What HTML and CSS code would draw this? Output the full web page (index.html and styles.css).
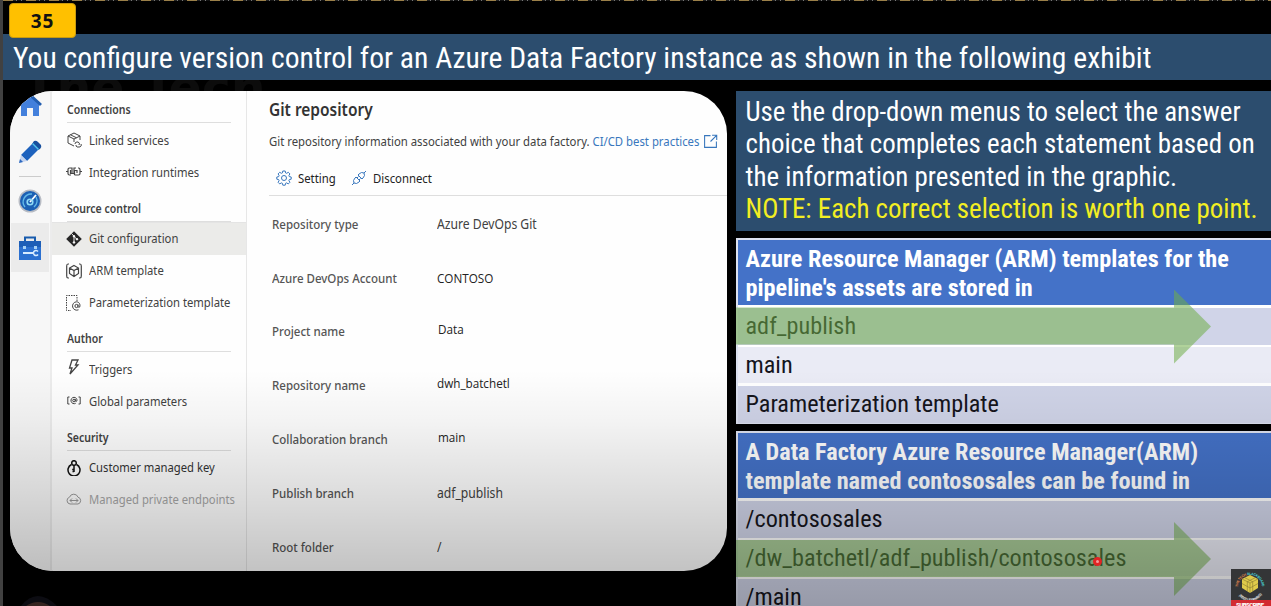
FILE: index.html
```
<!DOCTYPE html>
<html lang="en">
<head>
<meta charset="utf-8">
<title>Azure Data Factory version control</title>
<link rel="stylesheet" href="styles.css">
</head>
<body>
<main class="slide">
  <div class="ghost">The Tech</div>
  <header class="top"><div class="number">35</div></header>
  <h1 class="title"><span class="rc">You configure version control for an Azure Data Factory instance as shown in the following exhibit</span></h1>
  <div class="columns">
    <section class="exhibit">
      <aside class="rail">
        <svg class="r-home" viewBox="0 0 24 24"><path d="M3 10v13h6v-8h6v8h6V10l-9-8z" fill="#4380dc"/><path d="M1 12 12 2l11 10" fill="none" stroke="#235eb0" stroke-width="3"/></svg>
        <svg class="r-pen" viewBox="0 0 24 24"><path d="M3 15 16 2l6 6L9 21z" fill="#1d62bd"/><path d="M14 4l2-3q2-1 4 1l3 3q1 2-1 4l-2 1z" fill="#164f9e"/><path d="m14 4 6 6 1-1-6-6z" fill="#52c6ef"/><path d="m3 15-2 8 8-2z" fill="#c5d4ee"/><path d="m1 23 1-4 3 3z" fill="#2d69c0"/></svg>
        <hr class="r-line">
        <svg class="r-gauge" viewBox="0 0 24 24"><circle cx="12" cy="12" r="11.5" fill="#b8bcc4"/><circle cx="12" cy="12" r="10" fill="#1c60b4"/><path d="M7 18a8 8 0 0 1 7-13M18 8a8 8 0 0 1-2 10" fill="none" stroke="#63b9e8" stroke-width="1.4"/><path d="m12 13 6-7" stroke="#fff" stroke-width="1.8"/><circle cx="12" cy="13" r="2.8" fill="none" stroke="#8edaf5" stroke-width="1.6"/></svg>
        <div class="r-active"><svg viewBox="0 0 24 24"><path d="M7 5V1.5h10V5" fill="none" stroke="#195cae" stroke-width="2"/><path d="M1 5h22v19H1z" fill="#2b70d0"/><path d="M1 5h22v6H1z" fill="#1d5eb7"/><path d="M5 10h3v3H5zm11 0h3v3h-3z" fill="#a7d1f5"/><path d="M5 17h11" stroke="#d7ebff" stroke-width="2"/><path d="M20 15.500a2.500 2.500 0 1 0 0 3" fill="none" stroke="#d7ebff" stroke-width="1.500"/></svg></div>
      </aside>
      <nav class="nav">
        <div class="group"><h2><span class="sg">Connections</span></h2>
          <div class="item"><svg viewBox="0 0 16 16"><path d="M8 14 2 11V4l6-3 6 3v4M2 4l6 3 6-3M8 7v3M4.500 2.800l6 3"/><path d="M9 12a2 2 0 0 1 2-2h1a2 2 0 0 1 1 3M15 12a2 2 0 0 1-2 3h-2a2 2 0 0 1-1-2"/></svg><span class="sg">Linked services</span></div>
          <div class="item"><svg viewBox="0 0 16 16"><path d="M0 7.500h2M14 7.500h2M5 11H3.500Q2 11 2 9.500v-4Q2 4 3.500 4H6v5M4.500 6v3.500H8V4h2M8.500 11h4q1.500 0 1.500-1.500v-4Q14 4 12.500 4H12M8.500 11V6.500H11V9" stroke-width="1.2"/></svg><span class="sg">Integration runtimes</span></div>
        </div>
        <div class="group"><h2><span class="sg">Source control</span></h2>
          <div class="item active"><svg viewBox="0 0 16 16"><path d="m8 .2 7.800 7.800L8 15.800.2 8z" fill="#262626" stroke="none"/><path d="m5.500 2.500 5.500 6M8 5v7" stroke="#efeeec"/><circle cx="8" cy="5.200" r=".8" fill="#fff" stroke="#fff"/><circle cx="8" cy="11.500" r=".8" fill="#fff" stroke="#fff"/><circle cx="11" cy="8.200" r=".8" fill="#fff" stroke="#fff"/></svg><span class="sg">Git configuration</span></div>
          <div class="item"><svg viewBox="0 0 16 16"><path d="M3 1H2Q.7 1 .7 3v10q0 2 1.300 2h1M13 1h1q1.300 0 1.300 2v10q0 2-1.300 2h-1M8 2.500l4.500 2.500v5.500L8 13.500l-4.500-3V5zM3.500 5 8 7.500 12.500 5M8 7.500v6" stroke-width="1.200"/></svg><span class="sg">ARM template</span></div>
          <div class="item"><svg viewBox="0 0 16 16"><path d="M11 6V.5H.5v15H5" stroke-dasharray="1.500 1"/><circle cx="10.500" cy="11" r="1.600"/><path d="M12 9.500v2q.5 1.500 1.700.5c1-3-1-5.200-3.200-5.200a4.200 4.200 0 1 0 2 8"/></svg><span class="sg">Parameterization template</span></div>
        </div>
        <div class="group"><h2><span class="sg">Author</span></h2>
          <div class="item"><svg class="up" viewBox="0 0 16 16"><path d="M6 1h6L9.500 6H12L4 15l2-6H3.500z" stroke-width="1.300"/></svg><span class="sg">Triggers</span></div>
          <div class="item"><svg viewBox="0 0 16 16"><path d="M3.500 4H1.800v7h1.700M12.500 4h1.700v7h-1.700"/><circle cx="8" cy="7.500" r="1.300"/><path d="M9.300 6v2q1 1 1.600 0c.5-2-1-3.700-2.900-3.700a3.200 3.200 0 1 0 1.700 6"/></svg><span class="sg">Global parameters</span></div>
        </div>
        <div class="group"><h2><span class="sg">Security</span></h2>
          <div class="item dark"><svg viewBox="0 0 16 16"><path d="M5.500 4.500a6 6 0 1 0 5 0" stroke-width="1.500"/><circle cx="8" cy="3" r="2.300" stroke-width="1.500"/><path d="M8 5v7M8 9.500H6.200M8 11.500H6.500" stroke-width="1.500"/></svg><span class="sg">Customer managed key</span></div>
          <div class="item disabled"><svg viewBox="0 0 16 16"><path d="M4 12a3.500 3.500 0 0 1-.5-6.800 4.500 4.500 0 0 1 8.500 0A3.500 3.500 0 0 1 12 12zM4 8.500h8M6 6.500l-2 2 2 2M10 6.500l2 2-2 2"/></svg><span class="sg">Managed private endpoints</span></div>
        </div>
      </nav>
      <article class="repo">
        <h2 class="repo-title"><span class="sg">Git repository</span></h2>
        <p class="desc"><span class="sg">Git repository information associated with your data factory. <a>CI/CD best practices</a></span><svg viewBox="0 0 14 14"><path d="M7 1.500H1.500v11h11V7M8.500 1.200h4.300v4.300M12.500 1.500 7 7"/></svg></p>
        <div class="tools">
          <svg viewBox="0 0 16 16"><path d="M6.800 1h2.400l.4 1.900 1 .4 1.700-1 1.600 1.600-1 1.700.4 1 1.900.4v2.200l-1.900.4-.4 1 1 1.700-1.600 1.600-1.700-1-1 .4-.4 1.900H6.800l-.4-1.900-1-.4-1.700 1-1.600-1.600 1-1.700-.4-1L.8 9.200V7l1.900-.4.4-1-1-1.700 1.600-1.600 1.700 1 1-.4z"/><circle cx="8" cy="8" r="2.500"/></svg>
          <span class="sg setting">Setting</span>
          <svg viewBox="0 0 16 16"><path d="M1 15l2-2M15 1l-2 2M3 13q-1.500-2.500 1-5l1-1 4 4-1 1q-2.500 2.500-5 1zM13 3q1.500 2.500-1 5l-1 1-4-4 1-1q2.500-2.500 5-1zM6 8l1.500-1.500M8 10l1.500-1.500"/></svg>
          <span class="sg">Disconnect</span>
        </div>
        <dl class="fields">
          <dt><span class="sg">Repository type</span></dt><dd><span class="sg">Azure DevOps Git</span></dd>
          <dt><span class="sg">Azure DevOps Account</span></dt><dd class="alt"><span class="sg">CONTOSO</span></dd>
          <dt><span class="sg">Project name</span></dt><dd class="alt lift in"><span class="sg">Data</span></dd>
          <dt><span class="sg">Repository name</span></dt><dd class="alt lift"><span class="sg">dwh_batchetl</span></dd>
          <dt><span class="sg">Collaboration branch</span></dt><dd class="alt lift in"><span class="sg">main</span></dd>
          <dt><span class="sg">Publish branch</span></dt><dd><span class="sg">adf_publish</span></dd>
          <dt><span class="sg">Root folder</span></dt><dd><span class="sg">/</span></dd>
        </dl>
      </article>
    </section>
    <section class="answers">
      <p class="intro"><span class="rc">Use the drop-down menus to select the answer<br>choice that completes each statement based on<br>the information presented in the graphic.<br><em>NOTE: Each correct selection is worth one point.</em></span></p>
      <div class="choices">
        <h3><span class="rc">Azure Resource Manager (ARM) templates for the<br>pipeline's assets are stored in</span></h3>
        <div class="choice picked"><span class="rc">adf_publish</span><i class="arrow"></i></div>
        <div class="choice light"><span class="rc">main</span></div>
        <div class="choice"><span class="rc">Parameterization template</span></div>
      </div>
      <div class="choices">
        <h3><span class="rc">A Data Factory Azure Resource Manager(ARM)<br>template named contososales can be found in</span></h3>
        <div class="choice"><span class="rc">/contososales</span></div>
        <div class="choice light picked"><span class="rc">/dw_batchetl/adf_publish/contososales</span><i class="arrow"></i></div>
        <div class="choice"><span class="rc">/main</span></div>
      </div>
    </section>
  </div>
  <svg class="person" viewBox="0 0 44 12"><path d="M2 12Q18-8 38 12z" fill="#101018"/><path d="M7 12q12-8 24 0z" fill="#49312c"/></svg>
  <div class="shade"></div>
  <i class="pointer"></i>
  <svg class="badge" viewBox="0 0 40 37">
    <path d="M0 0h40v37H0z" fill="#343537"/>
    <path d="m19 6 8 4v9l-8 5-8-5v-9z" fill="#dfca4b"/><path d="m11 10 8 4 8-4M19 14v10M13.700 8.700l8 4v9.500M24.300 8.700l-8 4v9.500M11 14.500l8 4.500 8-4.500" fill="none" stroke="#87782f" stroke-width=".6"/>
    <path id="arc-top" d="M7 18a12 12 0 1 1 24 0" fill="none"/><path id="arc-low" d="M5 18a14 14 0 0 0 28 0" fill="none"/>
    <text class="ring" fill="#e1894e"><textPath href="#arc-top" textLength="37">THE TECH <tspan fill="#47cbd0">BLACKBOARD</tspan></textPath></text>
    <text class="ring" fill="#e6e6e6"><textPath href="#arc-low" startOffset="9" textLength="27">(KEEP LEARNING)</textPath></text>
    <path d="M0 31h40v6H0z" fill="#d32b31"/><text x="5" y="37.500" class="subscribe" textLength="28">SUBSCRIBE</text>
  </svg>
</main>
</body>
</html>
```
FILE: styles.css
```
* { box-sizing: border-box; margin: 0; padding: 0; }
body { background: #000; overflow: hidden; }
.slide { position: relative; width: 1271px; height: 606px; overflow: hidden; background: #000; border-left: 3px solid #414141; font-family: Roboto, "Liberation Sans", sans-serif; }
.slide::before { content: ""; position: absolute; inset: 0 0 auto; height: 1px; background: repeating-linear-gradient(90deg, #9b8049 0 10px, #222 10px 13px, #777 13px 14px, #111 14px 18px, #777 18px 19px, #111 19px 23px); }
.rc { display: inline-block; white-space: nowrap; font-stretch: 75%; }
.sg { display: inline-block; white-space: nowrap; transform: scaleX(.9); transform-origin: left center; }
.ghost { position: absolute; left: 20px; top: 61px; color: #0c0c0c; font: 700 49px/56px "DejaVu Sans", sans-serif; }
.top { height: 34px; padding: 3px 0 0 6px; position: relative; z-index: 1; }
.number { width: 67px; height: 35px; border-radius: 4px; border: 1px solid #c89a10; background: #ffc000; font: 700 19px/34px "Noto Sans", sans-serif; letter-spacing: .8px; text-align: center; color: #111; }
.title { position: relative; height: 46px; padding-left: 10px; background: #2c4d6e; color: #fff; font-weight: 400; font-size: 29.620px; line-height: 48px; }
.columns { display: flex; gap: 9px; padding: 11px 0 0 7px; }
.exhibit { position: relative; display: flex; width: 717px; height: 480px; border-radius: 43px; background: #fefefe; overflow: hidden; font-family: "Noto Sans", "Open Sans", sans-serif; color: #414141; }
.rail { width: 42px; padding-top: 2px; background: #f7f7f7; border-right: 2px solid #ececec; display: flex; flex-direction: column; align-items: center; }
.rail svg { width: 24px; height: 24px; display: block; flex: none; }
.r-pen { margin-top: 23px; }
.r-line { width: 22px; border: 0; border-top: 1px solid #ccc; margin-top: 12px; }
.r-gauge { margin-top: 12px; }
.r-active { width: 38px; height: 49px; margin-top: 10px; padding: 13px 0 0 7px; background: #ebebeb; }
.nav { width: 195px; padding-top: 4px; border-right: 1px solid #e7e7e7; }
.group { padding-bottom: 5.500px; }
.group h2 { margin: 0 15px 1px; height: 28px; border-bottom: 1px solid #dedede; font-size: 11.700px; line-height: 28px; font-weight: 600; }
.item { height: 32px; display: flex; align-items: center; gap: 7px; padding-left: 14px; font-size: 12.500px; }
.item svg, .tools svg, .desc svg { width: 16px; height: 16px; flex: none; fill: none; stroke: #444; stroke-width: 1; }
.item .up { margin-top: -5px; }
.item.active { background: #ebebe9; margin-top: -1px; height: 33px; border-top: 1px solid #e4e4e4; }
.dark { color: #333; }
.item.dark svg { stroke: #111; }
.disabled { color: #a6a6a6; }
.item.disabled svg { stroke: #999; }
.repo { flex: 1; min-width: 0; padding: 5px 0 0 22px; }
.repo-title { height: 26px; font-size: 17.200px; line-height: 27px; font-weight: 600; color: #333; }
.desc { height: 39px; display: flex; align-items: center; font-size: 12.600px; position: relative; }
.desc a { color: #3977bd; }
.desc svg { position: absolute; left: 434px; width: 15px; height: 15px; stroke: #3977bd; }
.tools { height: 35px; display: flex; align-items: center; gap: 6px; padding-left: 7px; border-bottom: 1px solid #dedede; color: #222; font-size: 12.600px; }
.tools svg { stroke: #3977bd; }
.setting { width: 47px; }
.fields { padding: 1px 0 0 3px; display: grid; grid-template-columns: 164.500px 1fr; grid-auto-rows: 53.800px; align-items: center; }
.fields dt { font-size: 12.800px; font-weight: 500; color: #555; }
.fields dd { font-size: 13.500px; }
.fields .alt { color: #222; font-family: "Open Sans", sans-serif; font-size: 13px; }
.fields .lift { padding-bottom: 4px; }
.fields .in { padding-left: 1.500px; }
.answers { flex: 1; min-width: 0; }
.intro { height: 140px; padding: 5px 9.500px; background: #2c4d6e; color: #fff; font-size: 26.900px; line-height: 32.300px; }
.intro em { font-style: normal; color: #f3ee23; }
.choices { position: relative; margin-top: 7px; height: 186px; border: 2px solid #dce1f0; border-right: 0; display: grid; grid-template-rows: 65px 38px 37px 38px; row-gap: 1.500px; background: #fff; }
.choices h3 { background: #4472c8; color: #fff; font-size: 24.240px; line-height: 29px; font-weight: 700; padding: 5px 7.500px; }
.choice { position: relative; background: #d0d4e8; color: #15151c; font-size: 24.240px; line-height: 36px; padding-left: 7.500px; border-top: 1px solid #fff; }
.light { background: #eaebf5; }
.arrow { position: absolute; left: -2px; top: -18px; width: 475px; height: 74px; background: rgba(112,173,71,.55); clip-path: polygon(0 18px, 438px 18px, 438px 0, 475px 37px, 438px 74px, 438px 55px, 0 55px); z-index: 1; }
.shade { position: absolute; inset: 370px 0 0; z-index: 3; background: linear-gradient(transparent, rgba(0,0,0,.04) 20%, rgba(0,0,0,.13) 52%, rgba(0,0,0,.23) 85%, rgba(0,0,0,.27)); }
.pointer { position: absolute; left: 1090px; top: 557px; width: 9px; height: 9px; border: 3px solid #e12525; border-radius: 50%; background: #f49b9b; z-index: 4; }
.badge { position: absolute; right: 0; bottom: 0; width: 40px; height: 37px; z-index: 5; }
.ring { font: 700 3.500px Roboto, sans-serif; }
.subscribe { font: 900 6px Roboto, sans-serif; fill: #fff; }
.person { position: absolute; left: 16px; bottom: 0; width: 44px; height: 12px; }
```
